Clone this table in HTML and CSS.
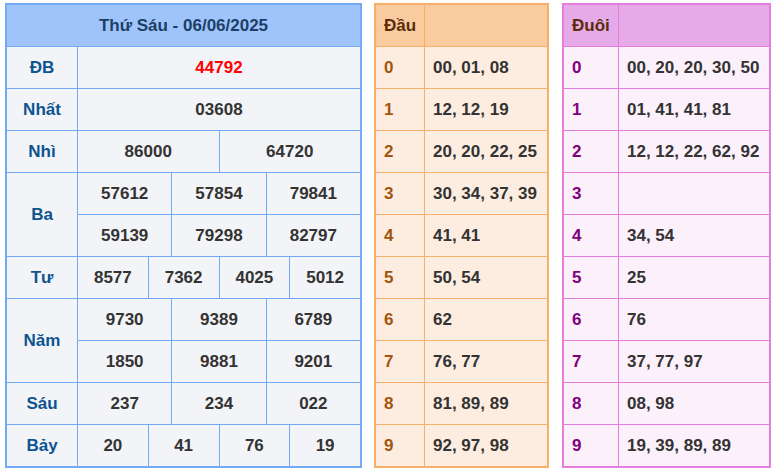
FILE: index.html
```html
<!DOCTYPE html>
<html lang="vi">
<head>
<meta charset="utf-8">
<title>KQXS</title>
<link rel="stylesheet" href="styles.css">
</head>
<body>
<div class="wrap">
  <div class="kq">
    <div class="c title s13">Thứ Sáu - 06/06/2025</div>
    <div class="c lbl">ĐB</div><div class="c num s12 red">44792</div>
    <div class="c lbl">Nhất</div><div class="c num s12">03608</div>
    <div class="c lbl">Nhì</div><div class="c num s6">86000</div><div class="c num s6">64720</div>
    <div class="c lbl r2">Ba</div><div class="c num s4">57612</div><div class="c num s4">57854</div><div class="c num s4">79841</div>
    <div class="c num s4">59139</div><div class="c num s4">79298</div><div class="c num s4">82797</div>
    <div class="c lbl">Tư</div><div class="c num s3">8577</div><div class="c num s3">7362</div><div class="c num s3">4025</div><div class="c num s3">5012</div>
    <div class="c lbl r2">Năm</div><div class="c num s4">9730</div><div class="c num s4">9389</div><div class="c num s4">6789</div>
    <div class="c num s4">1850</div><div class="c num s4">9881</div><div class="c num s4">9201</div>
    <div class="c lbl">Sáu</div><div class="c num s4">237</div><div class="c num s4">234</div><div class="c num s4">022</div>
    <div class="c lbl">Bảy</div><div class="c num s3">20</div><div class="c num s3">41</div><div class="c num s3">76</div><div class="c num s3">19</div>
  </div>

  <div class="lt dau">
    <div class="h">Đầu</div><div class="h"></div>
    <div class="d">0</div><div class="v">00, 01, 08</div>
    <div class="d">1</div><div class="v">12, 12, 19</div>
    <div class="d">2</div><div class="v">20, 20, 22, 25</div>
    <div class="d">3</div><div class="v">30, 34, 37, 39</div>
    <div class="d">4</div><div class="v">41, 41</div>
    <div class="d">5</div><div class="v">50, 54</div>
    <div class="d">6</div><div class="v">62</div>
    <div class="d">7</div><div class="v">76, 77</div>
    <div class="d">8</div><div class="v">81, 89, 89</div>
    <div class="d">9</div><div class="v">92, 97, 98</div>
  </div>

  <div class="lt duoi">
    <div class="h">Đuôi</div><div class="h"></div>
    <div class="d">0</div><div class="v">00, 20, 20, 30, 50</div>
    <div class="d">1</div><div class="v">01, 41, 41, 81</div>
    <div class="d">2</div><div class="v">12, 12, 22, 62, 92</div>
    <div class="d">3</div><div class="v"></div>
    <div class="d">4</div><div class="v">34, 54</div>
    <div class="d">5</div><div class="v">25</div>
    <div class="d">6</div><div class="v">76</div>
    <div class="d">7</div><div class="v">37, 77, 97</div>
    <div class="d">8</div><div class="v">08, 98</div>
    <div class="d">9</div><div class="v">19, 39, 89, 89</div>
  </div>
</div>
</body>
</html>
```

FILE: styles.css
```css
html, body {
  margin: 0;
  padding: 0;
  background: #ffffff;
  font-family: "Liberation Sans", Arial, sans-serif;
  font-size: 17px;
  font-weight: bold;
}

.wrap {
  display: flex;
  align-items: flex-start;
  padding: 3px 0 0 5px;
}

.kq {
  width: 357px;
  box-sizing: border-box;
  display: grid;
  grid-template-columns: 70px repeat(12, 1fr);
  grid-auto-rows: 41px;
  gap: 1px;
  background: #74a9f6;
  border: 2px solid #74a9f6;
}

.c {
  background: #f3f4f8;
  display: flex;
  align-items: center;
  justify-content: center;
  color: #333333;
}

.title {
  background: #9fc4fb;
  color: #1b3f66;
}

.lbl { color: #0d5491; grid-column: 1; }
.r2 { grid-row: span 2; }
.s13 { grid-column: span 13; }
.s12 { grid-column: span 12; }
.s6 { grid-column: span 6; }
.s4 { grid-column: span 4; }
.s3 { grid-column: span 3; }
.red { color: #ff0000; }

.lt {
  box-sizing: border-box;
  display: grid;
  grid-auto-rows: 41px;
  gap: 1px;
}

.lt > div {
  display: flex;
  align-items: center;
  padding-left: 8px;
  color: #333333;
}

.dau {
  width: 175px;
  margin-left: 12px;
  grid-template-columns: 48px 1fr;
  background: #f7b06a;
  border: 2px solid #f7b06a;
}
.dau > div { background: #fdede1; }
.dau > .h { background: #f9cb9e; color: #5a2b0b; }
.dau > .d { color: #a0550f; }

.duoi {
  width: 209px;
  margin-left: 13px;
  grid-template-columns: 54px 1fr;
  background: #e47fdf;
  border: 2px solid #e47fdf;
}
.duoi > div { background: #fcf0fa; }
.duoi > .h { background: #e5aae7; color: #5a2b0b; }
.duoi > .d { color: #800080; }
```
